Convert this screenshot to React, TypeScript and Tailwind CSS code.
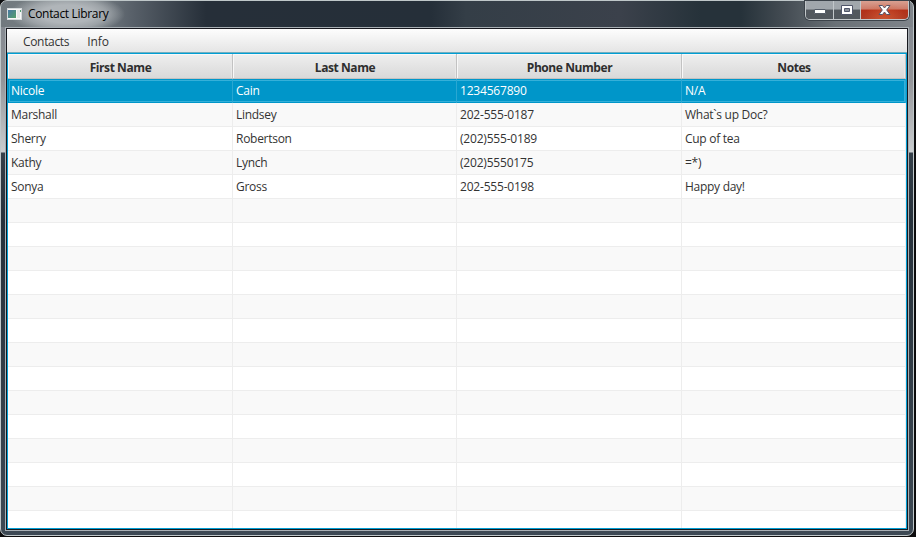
import type { ReactNode } from "react";

const headers = ["First Name", "Last Name", "Phone Number", "Notes"];

const contacts = [
  ["Nicole", "Cain", "1234567890", "N/A"],
  ["Marshall", "Lindsey", "202-555-0187", "What`s up Doc?"],
  ["Sherry", "Robertson", "(202)555-0189", "Cup of tea"],
  ["Kathy", "Lynch", "(202)5550175", "=*)"],
  ["Sonya", "Gross", "202-555-0198", "Happy day!"],
];

const blank = ["", "", "", ""];
const rows = [...contacts, ...Array.from({ length: 14 }, () => blank)];
const columns = "grid grid-cols-[225px_224px_225px_224px]";

function AppIcon() {
  return (
    <svg width="15" height="12" viewBox="0 0 15 12" className="shrink-0">
      <defs>
        <linearGradient id="pane" x1="0" y1="0" x2="1" y2="1">
          <stop offset="0" stopColor="#4878a4" />
          <stop offset="1" stopColor="#55a06a" />
        </linearGradient>
      </defs>
      <rect x="0.5" y="0.5" width="14" height="11" fill="#f8f8f8" stroke="#d5dadc" />
      <rect x="1" y="2" width="8" height="8" fill="url(#pane)" />
      <rect x="10" y="2" width="3" height="8" fill="#e4e6e7" />
      <rect x="13" y="2" width="1" height="2" fill="#50a070" />
    </svg>
  );
}

function CaptionButton({ className, children }: { className: string; children: ReactNode }) {
  return <button className={`flex h-[18px] items-center justify-center ${className}`}>{children}</button>;
}

function TitleBar() {
  return (
    <header className="flex h-[26px] shrink-0 items-start justify-between">
      <div className="ml-[6px] mt-[7px] flex items-start gap-[6px]">
        <AppIcon />
        <h1 className="-mt-px text-[12px] leading-[14px] font-normal tracking-[-0.33px] text-black">
          Contact Library
        </h1>
      </div>
      <div className="mr-[4px] flex h-[19px] overflow-hidden rounded-b-[5px] border border-t-0 border-[#c2c7ca] shadow-[0_0_0_1px_#3c434a]">
        <CaptionButton className="w-[28px] border-r border-[#c2c7ca] bg-linear-to-b from-[#a1a7ac] from-45% to-[#52585e] to-50%">
          <svg width="12" height="6" viewBox="0 0 12 6" className="mt-[4px]">
            <rect x="0.5" y="0.5" width="11" height="4" rx="0.5" fill="#fff" stroke="#555d68" />
          </svg>
        </CaptionButton>
        <CaptionButton className="w-[27px] border-r border-[#c2c7ca] bg-linear-to-b from-[#a1a7ac] from-45% to-[#52585e] to-50%">
          <svg width="12" height="10" viewBox="0 0 12 10" className="-mt-px">
            <path d="M.5.5h11v9H.5z" fill="#fff" stroke="#50566a" />
            <path d="M3.5 3.5h5v3h-5z" fill="#8c929b" stroke="#50566a" />
          </svg>
        </CaptionButton>
        <CaptionButton className="w-[47px] bg-[radial-gradient(ellipse_at_50%_100%,#e0653b99,transparent_65%),linear-gradient(#d9a091,#cc7b69_45%,#b33018_50%,#ad3b24)]">
          <svg width="13" height="10" viewBox="0 0 13 10" className="-mt-px">
            <path d="M1 .5h3.5L6.5 3l2-2.5H12L8.7 5 12 9.5H8.5L6.5 7l-2 2.5H1L4.3 5z" fill="#fff" stroke="#585568" />
          </svg>
        </CaptionButton>
      </div>
    </header>
  );
}

function HeaderRow() {
  return (
    <div className={`${columns} h-[25px] shrink-0`}>
      {headers.map((name) => (
        <div
          key={name}
          className="flex items-center justify-center border-r border-b border-[#c2c2c2] bg-linear-to-b from-[#efefef] to-[#d9d9d9] pt-[3px] pl-px text-[12px] font-bold tracking-[-0.42px] text-[#2e2e2e] shadow-[inset_1px_1px_0_#f8f8f8,inset_-1px_0_0_#e8e8e8]"
        >
          {name}
        </div>
      ))}
    </div>
  );
}

function TableRow({ cells, index }: { cells: string[]; index: number }) {
  const selected = index === 0;
  const tone = selected
    ? "bg-[#0096c9] text-white shadow-[inset_0_0_0_1px_#0096c9,inset_0_0_0_2px_#35b0d9]"
    : index % 2
      ? "bg-[#f9f9f9] text-[#333]"
      : "bg-white text-[#333]";
  return (
    <div className={`${columns} h-[24px] shrink-0 text-[12px] ${tone}`}>
      {cells.map((cell, i) => (
        <div
          key={i}
          className={`flex items-center border-r pl-[3px] ${i === 2 ? "tracking-[-0.2px]" : "tracking-[-0.28px]"} ${selected ? "border-[#29a7d2]" : "border-b border-[#ededed] pt-px"}`}
        >
          {cell}
        </div>
      ))}
    </div>
  );
}

export default function App() {
  return (
    <main className="h-[537px] w-[916px] overflow-hidden bg-[#0c0c0d] font-['Open_Sans','Noto_Sans',sans-serif]">
      <div className="flex h-[536px] w-[914px] flex-col rounded-[7px] border border-[#bfc7c9] bg-[radial-gradient(ellipse_58px_20px_at_66px_13px,#b0b5b9_45%,#b0b5b9aa_70%,#b0b5b900),linear-gradient(#0000_26px,#858a91_26px,#939599_80px,#cacdcf_151px,#343f49_152px,#26313b_220px,#3d4954_535px),linear-gradient(90deg,#71797e,#7a8287_90px,#59616a_130px,#262f39_205px,#252f39_430px,#343e47_465px,#3b414b_620px,#26323a_700px,#26323a_740px,#454d54_785px,#6a7177_835px,#80858b)]">
        <TitleBar />
        <div className="mr-[4px] mb-[4px] ml-[4px] flex min-h-0 flex-1 flex-col border border-[#a9b0b5]">
          <div className="flex min-h-0 flex-1 flex-col border border-[#17181e]">
            <nav className="flex h-[24px] shrink-0 items-center gap-[18px] border-b border-[#72aebf] bg-linear-to-b from-[#fdfdfd] to-[#e5e5e5] pt-[3px] pl-[16px] text-[12px] text-[#333]">
              <span className="tracking-[-0.33px]">Contacts</span>
              <span className="tracking-[-0.1px]">Info</span>
            </nav>
            <section className="flex min-h-0 flex-1 flex-col overflow-hidden border border-[#009ed4] bg-white">
              <HeaderRow />
              {rows.map((cells, index) => (
                <TableRow key={index} cells={cells} index={index} />
              ))}
            </section>
          </div>
        </div>
      </div>
    </main>
  );
}
